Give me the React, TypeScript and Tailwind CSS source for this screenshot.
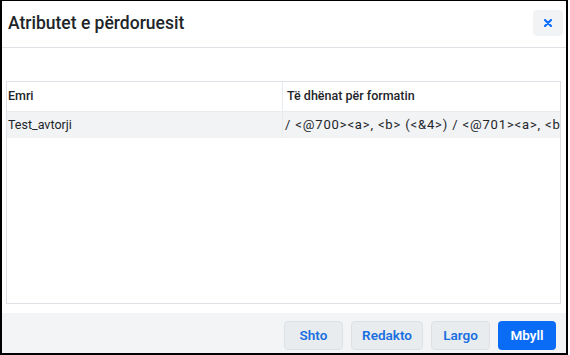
export default function App() {
  const font = { fontFamily: 'Roboto, "Noto Sans", Arial, sans-serif' };
  const buttons = [
    { label: "Shto", w: "w-[59px]" },
    { label: "Redakto", w: "w-[72px]" },
    { label: "Largo", w: "w-[59px]" },
  ];
  return (
    <div className="w-[570px] h-[355px] bg-white" style={font}>
      <div className="w-[568px] h-[355px] flex flex-col border-l-2 border-t border-r-2 border-b-2 border-black bg-white text-[#212529]">
        {/* header */}
        <div className="h-[47px] shrink-0 flex items-center justify-between pl-[6px] pr-[3px] border-b border-[#dee2e6]">
          <h1 className="text-[17.5px] font-medium leading-none">Atributet e përdoruesit</h1>
          <button className="w-[30px] h-[26px] rounded bg-[#f1f3f5] flex items-center justify-center mb-[2px]">
            <svg width="8" height="8" viewBox="0 0 8 8">
              <path d="M1 1 L7 7 M7 1 L1 7" stroke="#0d6efd" strokeWidth="2.2" strokeLinecap="round" />
            </svg>
          </button>
        </div>

        {/* body */}
        <div className="flex-1 pt-[33px] pl-[4px] pr-[5px] pb-[9px] flex">
          <div className="flex-1 border border-[#dee2e6] flex flex-col text-[12.5px]">
            <div className="grid grid-cols-[276px_1fr] h-[30px] border-b border-[#e9ecef] font-medium">
              <div className="flex items-center pl-[1px] border-r border-[#e9ecef]">Emri</div>
              <div className="flex items-center pl-[4px]">Të dhënat për formatin</div>
            </div>
            <div className="grid grid-cols-[276px_1fr] h-[26px] bg-[#f1f3f5]">
              <div className="flex items-center pl-[1px] border-r border-[#e9ecef]">Test_avtorji</div>
              <div className="flex items-center pl-[2px] overflow-hidden whitespace-nowrap text-[13px] tracking-[0.85px]">
                / &lt;@700&gt;&lt;a&gt;, &lt;b&gt; (&lt;&amp;4&gt;) / &lt;@701&gt;&lt;a&gt;, &lt;b
              </div>
            </div>
            <div className="flex-1" />
          </div>
        </div>

        {/* footer */}
        <div className="h-[40px] shrink-0 bg-[#f3f4f6] flex items-start justify-end gap-[8px] pt-[8px] pr-[10px]">
          {buttons.map((b) => (
            <button
              key={b.label}
              className={`${b.w} h-[29px] rounded-[4px] border border-[#dde1e6] bg-[#e9ecef] text-[#1a6fe0] text-[13.5px] font-semibold`}
            >
              {b.label}
            </button>
          ))}
          <button className="h-[29px] w-[58px] rounded-[4px] bg-[#0a6cf5] text-white text-[13.5px] font-semibold">
            Mbyll
          </button>
        </div>
      </div>
    </div>
  );
}
